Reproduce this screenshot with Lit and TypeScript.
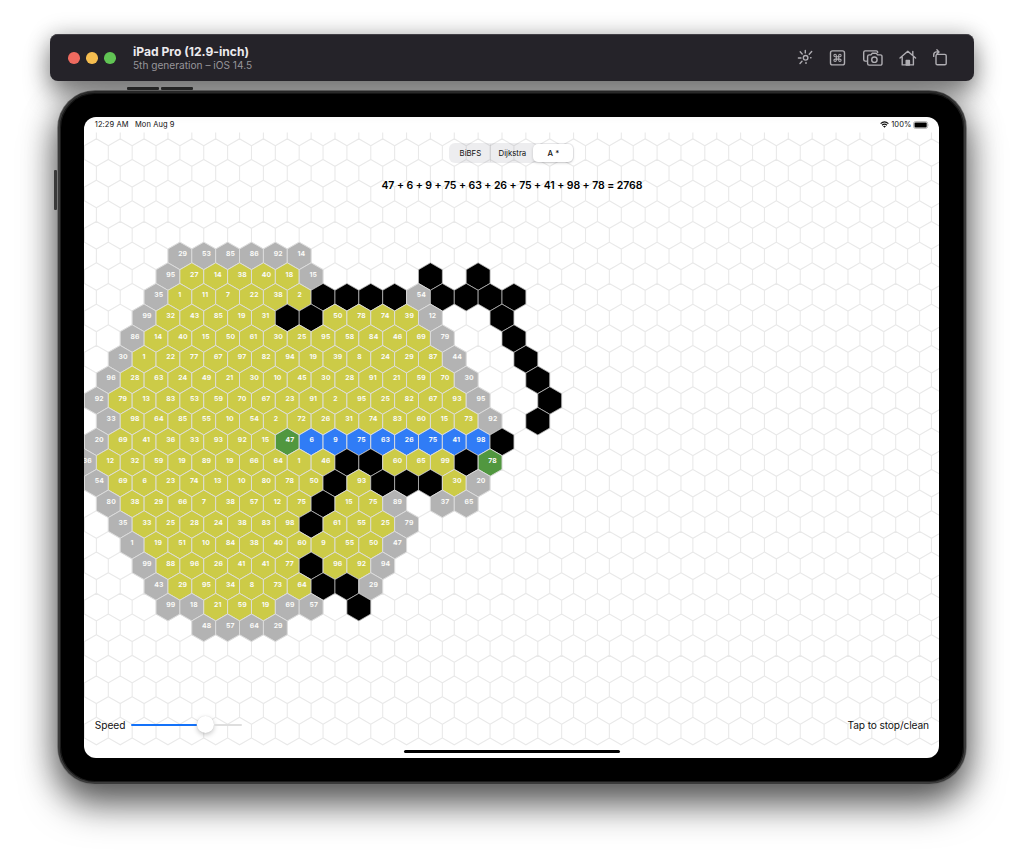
import { LitElement, html, svg, css } from "lit";
import { customElement } from "lit/decorators.js";

const PITCH = 23.86;
const ROW = 20.66;
const R = 13.77;
// Centre of column 0 in the first labelled row, in screen coordinates.
const X0 = 0.45;
const Y0 = 138.9;

// First column, then cells: g frontier, v visited, p path, e endpoint, K wall, "." empty.
const ROWS: [number, string][] = [
  [4, "g29 g53 g85 g86 g92 g14"],
  [3, "g95 27 14 38 40 18 g15 . . . . K . K"],
  [3, "g35 1 11 7 22 38 2 K K K K g54 K K K K"],
  [2, "g99 32 43 85 19 31 K K 50 78 74 39 g12 . . K"],
  [2, "g86 14 40 15 50 61 30 25 95 58 84 46 69 g79 . . K"],
  [1, "g30 1 22 77 67 97 82 94 19 39 8 24 29 87 g44 . . K"],
  [1, "g96 28 63 24 49 21 30 10 45 30 28 91 21 59 70 g30 . . K"],
  [0, "g92 79 13 83 53 59 70 67 23 91 2 95 25 82 67 93 g95 . . K"],
  [1, "g33 98 64 85 55 10 54 2 72 26 31 74 83 60 15 73 g92 . K"],
  [0, "g20 69 41 36 33 93 92 15 e47 p6 p9 p75 p63 p26 p75 p41 p98 K"],
  [0, "g36 12 32 59 19 89 19 66 64 1 46 K K 60 65 99 K e78"],
  [0, "g54 69 6 23 74 13 10 80 78 50 K 93 K K K 30 g20"],
  [1, "g80 38 29 66 7 38 57 12 75 K 15 75 g89 . g37 g65"],
  [1, "g35 33 25 28 24 38 83 98 K 61 55 25 g79"],
  [2, "g1 19 51 10 84 38 40 60 9 55 50 g47"],
  [2, "g99 88 96 26 41 41 77 K 96 92 g94"],
  [3, "g43 29 95 34 8 73 64 K K g29"],
  [3, "g99 g18 21 59 19 g69 g57 . K"],
  [5, "g48 g57 g64 g29"],
];

const cx = (r: number, c: number) => X0 + c * PITCH + (Math.abs(r) % 2 ? PITCH / 2 : 0);
const cy = (r: number) => Y0 + r * ROW;
const hex = (x: number, y: number) => {
  const w = PITCH / 2;
  return `M${x.toFixed(2)} ${(y - R).toFixed(2)}l${w} ${R / 2}v${R}l${-w} ${R / 2}l${-w} ${-R / 2}v${-R}z`;
};

@customElement("hex-board")
class HexBoard extends LitElement {
  static styles = css`
    :host { display: block; }
    svg { display: block; }
    .grid { fill: none; stroke: #e9e9e9; stroke-width: 1.1; }
    .g { fill: #b3b3b3; }
    .v { fill: #cccb47; }
    .p { fill: #307cf6; }
    .e { fill: #51973f; }
    .K { fill: #000; }
    .cell { stroke: #dedede; stroke-width: 0.9; }
    .K.cell { stroke: #c4c4c4; stroke-width: 0.7; }
    text { font: 700 6.8px Inter, "Liberation Sans", sans-serif; letter-spacing: 0.15px; fill: #fafaf7; text-rendering: geometricPrecision; }
  `;
  render() {
    let grid = "";
    for (let r = -6; r <= 23; r++) for (let c = -1; c < 37; c++) grid += hex(cx(r, c), cy(r));
    const cells = ROWS.flatMap(([start, s], r) =>
      s.split(" ").map((t, i) => {
        const kind = /^\d/.test(t) ? "v" : t[0];
        return { kind, n: t.replace(/\D/g, ""), x: cx(r, start + i), y: cy(r) };
      }).filter((c) => c.kind !== ".")
    );
    return html`<svg width="855" height="641" viewBox="0 0 855 641">
      <clipPath id="safe"><rect x="0" y="15.6" width="855" height="626" /></clipPath>
      <g clip-path="url(#safe)">
        <path class="grid" d=${grid} />
        ${cells.map((c) => svg`<path class="cell ${c.kind}" d=${hex(c.x, c.y)} />`)}
        ${cells.filter((c) => c.n).map((c) => svg`<text x=${c.x - 1.7} y=${c.y + 0.2}>${c.n}</text>`)}
      </g>
    </svg>`;
  }
}

@customElement("title-bar")
class TitleBar extends LitElement {
  static styles = css`
    :host { display: flex; align-items: center; height: 47px; padding: 0 25px 0 18px; border-radius: 8px;
      background: #252329; box-sizing: border-box; font-family: Inter, "Liberation Sans", sans-serif;
      box-shadow: inset 0 0.7px 0 #4b494f, 0 14px 26px rgba(0,0,0,.45), 0 0 22px rgba(0,0,0,.22); }
    .lights { display: flex; gap: 6.4px; margin-right: 17.4px; }
    .dot { width: 11.6px; height: 11.6px; border-radius: 50%; }
    .r { background: #ee6a5f; } .y { background: #f5bd4f; } .n { background: #61c454; }
    .text { flex: 1; padding-top: 1.8px; }
    .name { font-size: 12.1px; line-height: 14px; font-weight: 700; color: #eceaed; }
    .os { font-size: 10.15px; line-height: 13px; color: #97959a; }
    svg { fill: none; stroke: #b0aeb3; stroke-width: 1.4; stroke-linecap: round; stroke-linejoin: round; display: block; }
  `;
  render() {
    return html`
      <div class="lights"><i class="dot r"></i><i class="dot y"></i><i class="dot n"></i></div>
      <div class="text"><div class="name">iPad Pro (12.9-inch)</div><div class="os">5th generation – iOS 14.5</div></div>
      <svg width="152" height="20" viewBox="797 47.9 152 20">
        <circle cx="805.6" cy="57.7" r="2.3" />
        <path d="M805.3 52.8v-2.4M809.2 54.2l2.5-2.8M802.2 53.9l-2-2.2M801 57.9h-2.6M802 61.2l-2 2.1M806 62.4v.9M810.6 57.6h.4" />
        <rect x="830.5" y="50.8" width="14" height="14" rx="2" />
        <path stroke-width="1.1" d="M836.3 55.4v4.8a1.2 1.2 0 1 1-1.2-1.2h4.8a1.2 1.2 0 1 1-1.2 1.2v-4.8a1.2 1.2 0 1 1 1.2 1.2h-4.8a1.2 1.2 0 1 1 1.2-1.2z" />
        <path d="M866.4 61h-1.2a1.5 1.5 0 0 1-1.5-1.5v-7.2a1.5 1.5 0 0 1 1.5-1.5h11a1.5 1.5 0 0 1 1.5 1.5M869.2 54.8l1.8 0 1.3-1.6h4l1.3 1.6h2.8a1.6 1.6 0 0 1 1.6 1.6v7a1.6 1.6 0 0 1-1.6 1.6h-11.2a1.6 1.6 0 0 1-1.6-1.6v-7a1.6 1.6 0 0 1 1.6-1.6z" />
        <circle cx="874.4" cy="59.6" r="2.7" />
        <path d="M900 58l7.8-6.9 7.8 6.9M902.2 57v7.8h11.2V57M912.8 54.6v-3.2" />
        <path d="M906.2 65v-4.6h3.2v4.6z" fill="#b0aeb3" />
        <rect x="936" y="54.3" width="10.2" height="10.4" rx="1.4" />
        <path d="M933.7 56.3v-1.5q0-3 3-3h2M936.9 49.7l2.1 2.1-2.1 2.1" />
      </svg>`;
  }
}

@customElement("app-root")
class AppRoot extends LitElement {
  static styles = css`
    :host { display: block; width: 1024px; height: 860px; overflow: hidden; background: #fff;
      font-family: Inter, "Liberation Sans", sans-serif; color: #111; }
    * { box-sizing: border-box; }
    .stack { padding: 34.4px 50px 0; display: flex; flex-direction: column; }
    title-bar { position: relative; z-index: 2; width: 924px; }
    .device { position: relative; margin: 9.6px 0 0 8px; width: 908px; height: 693px; border-radius: 37px; padding: 24px 24.4px;
      background: #000; border: 2px solid #3a3a3a;
      box-shadow: 0 0 0 0.8px #6d6d6d, inset 0 0 0 1px #1c1c1c, 0 22px 36px rgba(0,0,0,.5), 0 6px 34px rgba(0,0,0,.42); }
    .key { position: absolute; background: #393939; border-radius: 1px; }
    .k1 { left: 67px; top: -5.5px; width: 32px; height: 3px; }
    .k2 { left: 101px; top: -5.5px; width: 32px; height: 3px; }
    .k3 { left: -6px; top: 77px; width: 3px; height: 40px; }
    .screen { position: relative; width: 855px; height: 641px; background: #fff; border-radius: 12px; overflow: hidden; }
    hex-board { position: absolute; inset: 0; }
    .ui { position: relative; height: 100%; display: flex; flex-direction: column; align-items: center; }
    .status { width: 100%; height: 16px; padding: 0 9px 0 10.4px; display: flex; align-items: center; gap: 6.5px; font-size: 7.5px; letter-spacing: 0.08px; }
    .grow { flex: 1; }
    .batt { display: flex; align-items: center; gap: 2px; }
    .status svg { display: block; }
    .seg { margin-top: 10.5px; display: flex; width: 125px; height: 20px; padding: 1px; border-radius: 6px; background: rgba(118,118,128,.13); font-size: 7.8px; }
    .opt { width: 40px; display: flex; align-items: center; justify-content: center; }
    .mid { width: 43px; border-left: 0.7px solid rgba(0,0,0,.06); }
    .on { background: #fff; border-radius: 5px; font-weight: 500; box-shadow: 0 1px 3px rgba(0,0,0,.18); }
    .sum { margin-top: 15.3px; font-size: 10.5px; line-height: 14px; font-weight: 600; color: #000; white-space: nowrap; letter-spacing: -0.075px; }
    .foot { margin-top: auto; width: 100%; height: 20px; padding: 0 10.4px; display: flex; align-items: center; font-size: 10.2px; letter-spacing: -0.06px; }
    .tap { letter-spacing: -0.12px; }
    .slider { margin-left: 5.4px; width: 111px; height: 16px; display: flex; align-items: center; }
    .done { width: 66px; height: 2.4px; background: #1472f9; border-radius: 1px; }
    .knob { width: 17px; height: 17px; border-radius: 50%; background: #fff; box-shadow: 0 2px 5px rgba(0,0,0,.22), 0 0 1px rgba(0,0,0,.15); }
    .rest { flex: 1; height: 2.2px; background: #dedede; border-radius: 1px; }
    .home { margin: 15px 0 5px; width: 216px; height: 3px; border-radius: 2px; background: #000; }
  `;
  render() {
    return html`<div class="stack">
      <title-bar></title-bar>
      <div class="device">
        <i class="key k1"></i><i class="key k2"></i><i class="key k3"></i>
        <div class="screen">
          <hex-board></hex-board>
          <div class="ui">
            <div class="status">
              <span>12:29 AM</span><span>Mon Aug 9</span><span class="grow"></span>
              <div class="batt">
                <svg width="9" height="7" viewBox="0 0 9 7" fill="none" stroke="#111" stroke-width="1.2"><path d="M.6 2.6Q4.5-.9 8.4 2.6M2 4.2q2.5-2.1 5 0" /><path d="M3 5.2q1.5-1.1 3 0L4.5 6.8z" fill="#111" stroke="none" /></svg>
                <span>100%</span>
                <svg width="17" height="8" viewBox="0 0 17 8"><rect x=".6" y=".6" width="14" height="6.8" rx="1.8" fill="none" stroke="#999" stroke-width=".7" /><rect x="1.5" y="1.5" width="12.2" height="5" rx="1" /><path d="M15.4 3q1 1 0 2z" fill="#999" /></svg>
              </div>
            </div>
            <div class="seg"><div class="opt">BiBFS</div><div class="opt mid">Dijkstra</div><div class="opt on">A *</div></div>
            <div class="sum">47 + 6 + 9 + 75 + 63 + 26 + 75 + 41 + 98 + 78 = 2768</div>
            <div class="foot"><span>Speed</span>
              <div class="slider"><div class="done"></div><div class="knob"></div><div class="rest"></div></div>
              <span class="grow"></span><span class="tap">Tap to stop/clean</span></div>
            <div class="home"></div>
          </div>
        </div>
      </div>
    </div>`;
  }
}
